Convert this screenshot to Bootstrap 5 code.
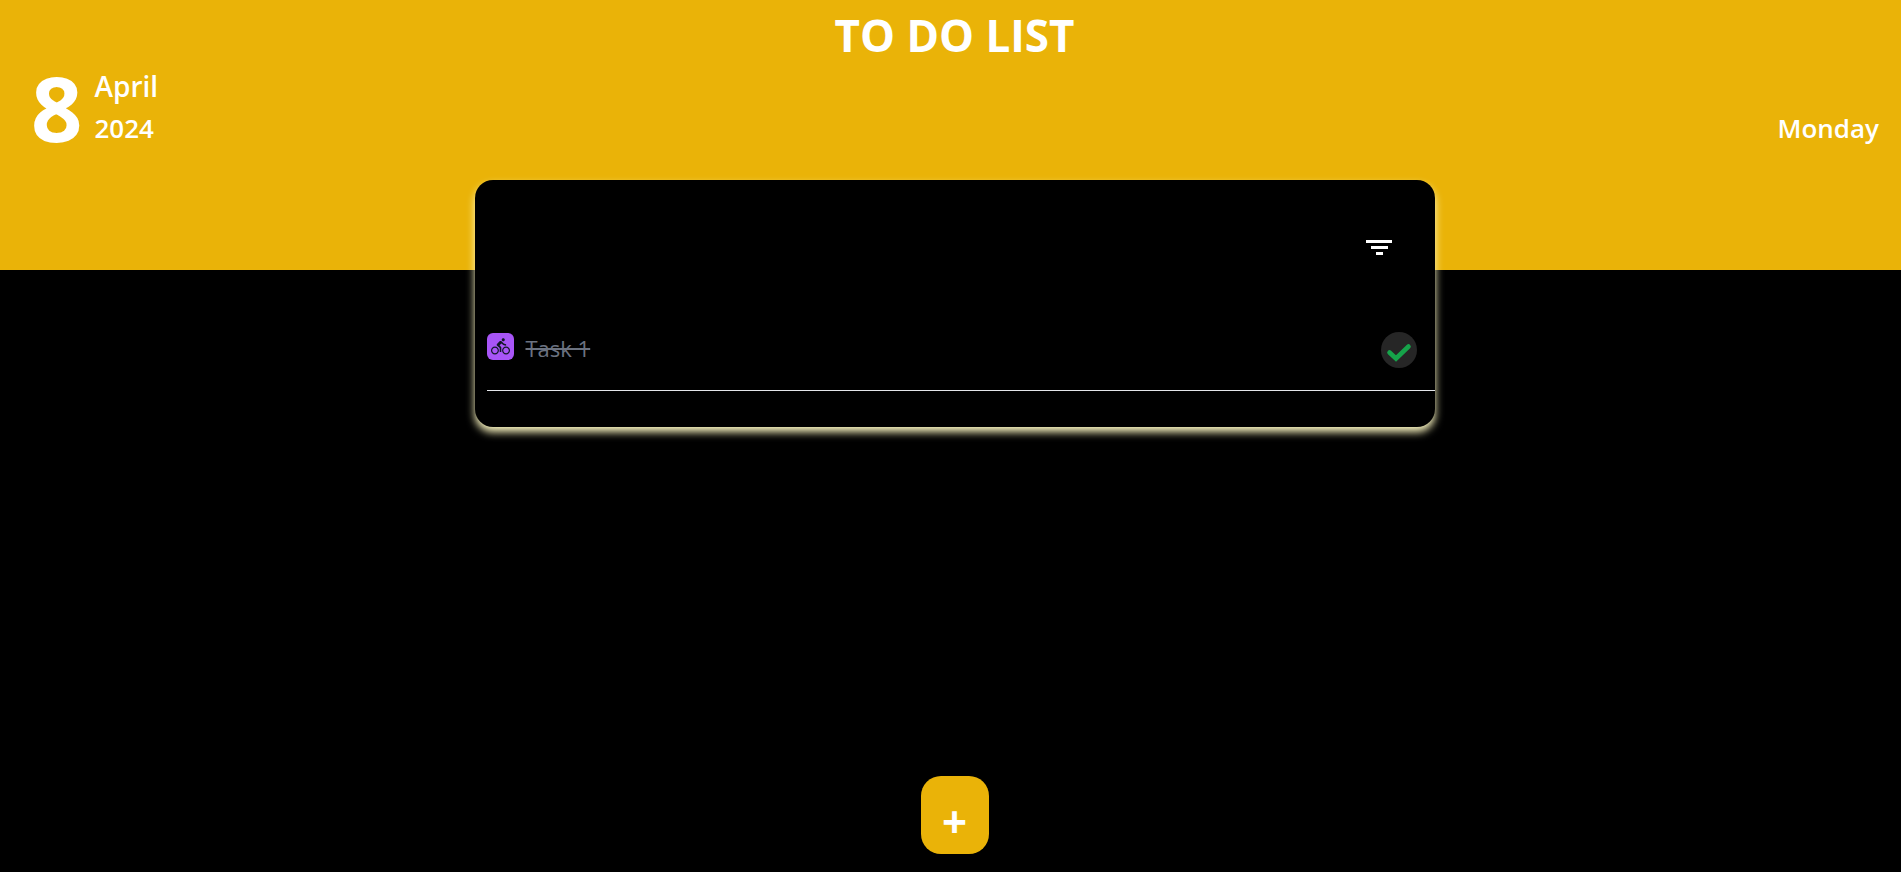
<!DOCTYPE html>
<html lang="en">
<head>
<meta charset="utf-8">
<meta name="viewport" content="width=device-width, initial-scale=1">
<title>To Do List</title>
<link rel="stylesheet" href="https://cdn.jsdelivr.net/npm/bootstrap@5.3.0/dist/css/bootstrap.min.css">
<style>
  body { background: #000; color: #fff; font-family: "Segoe UI", "Open Sans", sans-serif; }
  .hero { background: #eab308; height: 270px; }
  .app-title { font-size: 44px; line-height: 70px; font-weight: 700; }
  .day-number { font-size: 90px; line-height: 80px; font-weight: 700; }
  .month-name { font-size: 28px; line-height: 42px; }
  .sub-date { font-size: 26px; line-height: 42px; }
  .date-row { padding: 0 22px 0 31px; }
  .date-stack { margin-top: -5px; }
  .todo-wrap { margin-top: -90px; }
  .todo-panel { width: 960px; max-width: 100%; padding: 48px 0 36px 12px; background: #000; border-radius: 18px; box-shadow: 0 5px 8px #fef9c3; }
  .filter-btn { margin-right: 40px; }
  .task-row { margin-top: 68px; padding: 0 18px 22px 0; border-bottom: 1px solid #e5e7eb; }
  .task-icon { width: 27px; height: 27px; margin-top: 1px; border-radius: 6px; background: #a855f7; }
  .task-name { font-size: 22px; line-height: 32px; color: #6b7280; }
  .done-btn { width: 36px; height: 36px; background: #262626; }
  .add-btn { width: 68px; height: 78px; margin-bottom: 18px; padding: 12px 0 0; border-radius: 20px; background: #eab308; color: #fff; font-size: 44px; line-height: 60px; font-weight: 700; }
</style>
</head>
<body class="d-flex flex-column min-vh-100">
<header class="hero">
  <h1 class="app-title text-center ps-2 mb-0">TO DO LIST</h1>
  <div class="date-row d-flex justify-content-between align-items-end fw-semibold">
    <div class="date-stack d-flex align-items-center">
      <span class="day-number">8</span>
      <div class="ms-2 ps-1">
        <div class="month-name">April</div>
        <div class="sub-date">2024</div>
      </div>
    </div>
    <div class="sub-date">Monday</div>
  </div>
</header>
<div class="todo-wrap ps-2">
<main class="todo-panel mx-auto">
  <div class="d-flex justify-content-end">
    <button class="filter-btn btn p-0 border-0" type="button" aria-label="Filter">
      <svg class="d-block" width="32" height="36" viewBox="0 0 32 36" fill="#fff"><path d="M3 12h26v3H3zM8 18h17v3H8zM13 24h7v3h-7z"/></svg>
    </button>
  </div>
  <ul class="list-unstyled mb-0">
    <li class="task-row d-flex align-items-start">
      <span class="task-icon d-flex align-items-center justify-content-center">
        <svg width="19" height="19" viewBox="0 0 24 24" fill="#111827"><path d="M15.500 5.500c1.100 0 2-.9 2-2s-.9-2-2-2-2 .9-2 2 .9 2 2 2zM5 12c-2.800 0-5 2.200-5 5s2.200 5 5 5 5-2.200 5-5-2.200-5-5-5zm0 8.500c-1.900 0-3.500-1.600-3.500-3.500s1.600-3.500 3.500-3.500 3.500 1.600 3.500 3.500-1.600 3.500-3.500 3.500zm5.800-10l2.400-2.400.8.800c1.300 1.300 3 2.100 5.100 2.100V9c-1.500 0-2.700-.6-3.600-1.500l-1.900-1.900c-.5-.4-1-.6-1.600-.6s-1.100.2-1.400.6L7.800 8.400c-.4.400-.6.900-.6 1.400 0 .6.200 1.100.6 1.400L11 14v5h2v-6.200l-2.200-2.300zM19 12c-2.800 0-5 2.200-5 5s2.200 5 5 5 5-2.200 5-5-2.200-5-5-5zm0 8.500c-1.900 0-3.500-1.600-3.500-3.500s1.600-3.500 3.500-3.500 3.500 1.600 3.500 3.500-1.600 3.500-3.500 3.500z"/></svg>
      </span>
      <s class="task-name ms-2 ps-1">Task 1</s>
      <button class="done-btn btn rounded-circle border-0 p-0 ms-auto" type="button" aria-label="Mark Task 1 as not done">
        <svg class="d-block" width="36" height="36" viewBox="0 0 36 36" fill="none" stroke="#16a34a" stroke-width="4.600" stroke-linecap="round"><path d="M8.500 20.500l6.500 6L27.500 14.500"/></svg>
      </button>
    </li>
  </ul>
</main>
</div>
<footer class="mt-auto text-center ps-2">
  <button class="add-btn btn border-0" type="button" aria-label="Add task">+</button>
</footer>
<script src="https://cdn.jsdelivr.net/npm/bootstrap@5.3.0/dist/js/bootstrap.bundle.min.js"></script>
</body>
</html>
